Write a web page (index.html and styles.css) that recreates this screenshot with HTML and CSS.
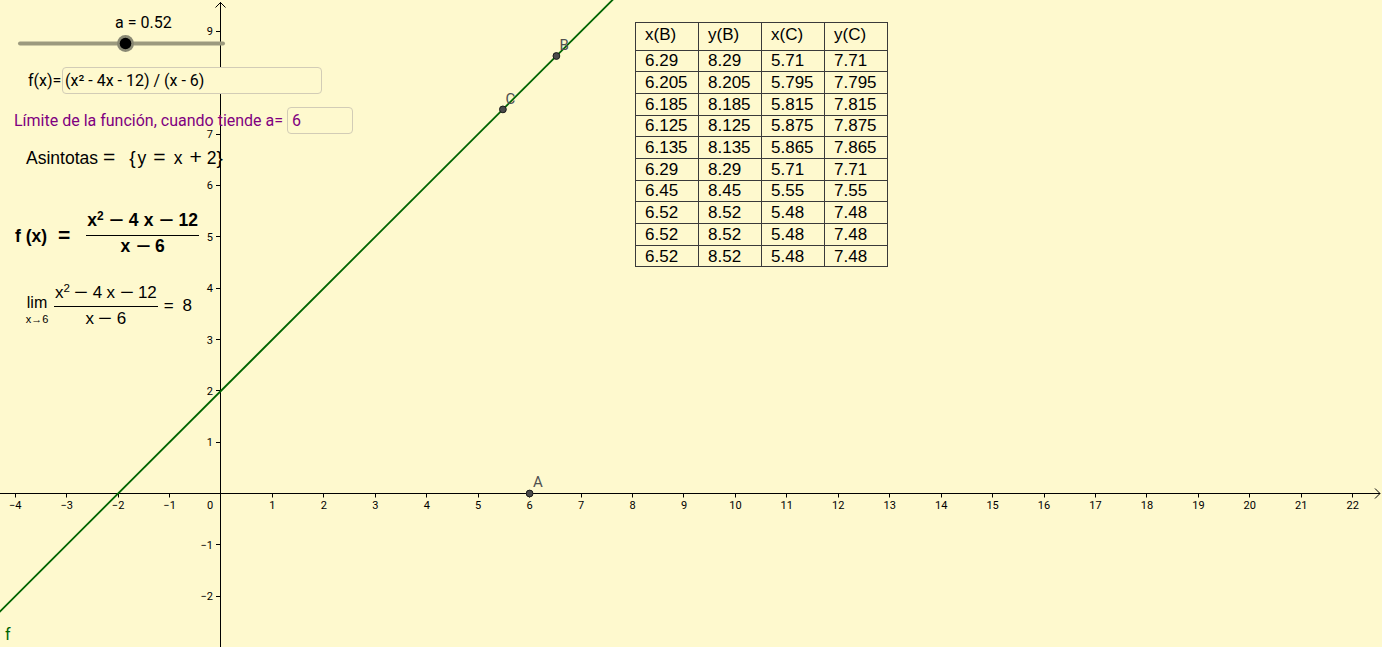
FILE: index.html
```html
<!DOCTYPE html>
<html lang="es">
<head>
<meta charset="utf-8">
<title>Límite de la función</title>
<link rel="stylesheet" href="styles.css">
</head>
<body>
<div class="applet">
  <svg class="graph" width="1382" height="647" viewBox="0 0 1382 647" xmlns="http://www.w3.org/2000/svg">
    <g class="axes">
      <path d="M0 493.5H1380"/>
      <path d="M1375 488.5l5 5-5 5"/>
      <path d="M220.5 2V647"/>
      <path d="M215.5 7.5l5-5 5 5"/>
      <path d="M15.5 493.5v4M66.5 493.5v4M118.5 493.5v4M169.5 493.5v4M272.5 493.5v4M323.5 493.5v4M375.5 493.5v4M426.5 493.5v4M478.5 493.5v4M529.5 493.5v4M581.5 493.5v4M632.5 493.5v4M683.5 493.5v4M735.5 493.5v4M786.5 493.5v4M838.5 493.5v4M889.5 493.5v4M941.5 493.5v4M992.5 493.5v4M1044.5 493.5v4M1095.5 493.5v4M1146.5 493.5v4M1198.5 493.5v4M1249.5 493.5v4M1301.5 493.5v4M1352.5 493.5v4"/>
      <path d="M216 31.5h4.5M216 82.5h4.5M216 134.5h4.5M216 185.5h4.5M216 236.5h4.5M216 288.5h4.5M216 339.5h4.5M216 390.5h4.5M216 442.5h4.5M216 544.5h4.5M216 596.5h4.5"/>
    </g>
    <g class="tick tick-x">
      <text x="15.2" y="509">−4</text>
      <text x="66.7" y="509">−3</text>
      <text x="118.1" y="509">−2</text>
      <text x="169.6" y="509">−1</text>
      <text x="210" y="509">0</text>
      <text x="272.4" y="509">1</text>
      <text x="323.9" y="509">2</text>
      <text x="375.3" y="509">3</text>
      <text x="426.8" y="509">4</text>
      <text x="478.2" y="509">5</text>
      <text x="529.6" y="509">6</text>
      <text x="581.1" y="509">7</text>
      <text x="632.5" y="509">8</text>
      <text x="684" y="509">9</text>
      <text x="735.4" y="509">10</text>
      <text x="786.8" y="509">11</text>
      <text x="838.3" y="509">12</text>
      <text x="889.7" y="509">13</text>
      <text x="941.2" y="509">14</text>
      <text x="992.6" y="509">15</text>
      <text x="1044" y="509">16</text>
      <text x="1095.5" y="509">17</text>
      <text x="1146.9" y="509">18</text>
      <text x="1198.4" y="509">19</text>
      <text x="1249.8" y="509">20</text>
      <text x="1301.2" y="509">21</text>
      <text x="1352.7" y="509">22</text>
    </g>
    <g class="tick tick-y">
      <text x="213" y="35.4">9</text>
      <text x="213" y="86.7">8</text>
      <text x="213" y="138.1">7</text>
      <text x="213" y="189.4">6</text>
      <text x="213" y="240.8">5</text>
      <text x="213" y="292.1">4</text>
      <text x="213" y="343.5">3</text>
      <text x="213" y="394.8">2</text>
      <text x="213" y="446.2">1</text>
      <text x="213" y="548.9">−1</text>
      <text x="213" y="600.2">−2</text>
    </g>
    <line class="fline" x1="-5" y1="616.4" x2="617.5" y2="-5"/>
    <text class="flabel" x="5" y="640">f</text>
    <g class="slider">
      <line class="track" x1="20" y1="43.5" x2="223" y2="43.5"/>
      <circle class="halo" cx="125.5" cy="43.5" r="8.5"/>
      <circle class="knob" cx="125.5" cy="43.5" r="5.8"/>
      <text class="slider-label" x="115" y="28">a = 0.52</text>
    </g>
    <g class="pt">
      <circle cx="529.6" cy="493.5" r="3.4"/>
      <circle cx="556.4" cy="56" r="3.4"/>
      <circle cx="502.9" cy="109.4" r="3.4"/>
    </g>
    <g class="ptlabel">
      <text x="533" y="487">A</text>
      <text x="559.5" y="50">B</text>
      <text x="505.5" y="103.5">C</text>
    </g>
  </svg>

  <div class="panel">
    <div class="row-fx">
      <span class="fx-label">f(x)=</span>
      <div class="input input-wide">(x² - 4x - 12) / (x - 6)</div>
    </div>
    <div class="row-lim">
      <span class="lim-label">Límite de la función, cuando tiende a=</span>
      <div class="input input-narrow">6</div>
    </div>
    <div class="row-asym math">
      <span>Asintotas</span><span class="op gap5">=</span><span class="br gap14">{</span><span class="gap2">y</span><span class="op gap7">=</span><span class="gap8">x</span><span class="op gap7">+</span><span class="gap5">2</span><span class="br">}</span>
    </div>
    <div class="row-f math">
      <span class="lhs">f (x)<span class="eq">=</span></span>
      <span class="frac">
        <span class="num">x<span class="sup">2</span> <span class="minus">−</span> 4 x <span class="minus">−</span> 12</span>
        <span class="den">x <span class="minus">−</span> 6</span>
      </span>
    </div>
    <div class="row-limit math">
      <span class="limop"><span class="lim">lim</span><span class="sub">x→6</span></span>
      <span class="frac">
        <span class="num">x<span class="sup">2</span> <span class="minus">−</span> 4 x <span class="minus">−</span> 12</span>
        <span class="den">x <span class="minus">−</span> 6</span>
      </span>
      <span class="res">= 8</span>
    </div>
  </div>

  <table class="values">
    <tr class="head"><td>x(B)</td><td>y(B)</td><td>x(C)</td><td>y(C)</td></tr>
    <tr><td>6.29</td><td>8.29</td><td>5.71</td><td>7.71</td></tr>
    <tr><td>6.205</td><td>8.205</td><td>5.795</td><td>7.795</td></tr>
    <tr><td>6.185</td><td>8.185</td><td>5.815</td><td>7.815</td></tr>
    <tr><td>6.125</td><td>8.125</td><td>5.875</td><td>7.875</td></tr>
    <tr><td>6.135</td><td>8.135</td><td>5.865</td><td>7.865</td></tr>
    <tr><td>6.29</td><td>8.29</td><td>5.71</td><td>7.71</td></tr>
    <tr><td>6.45</td><td>8.45</td><td>5.55</td><td>7.55</td></tr>
    <tr><td>6.52</td><td>8.52</td><td>5.48</td><td>7.48</td></tr>
    <tr><td>6.52</td><td>8.52</td><td>5.48</td><td>7.48</td></tr>
    <tr><td>6.52</td><td>8.52</td><td>5.48</td><td>7.48</td></tr>
  </table>
</div>
</body>
</html>
```

FILE: styles.css
```css
body {
  margin: 0;
  background: #fef9ce;
}

.applet {
  position: relative;
  width: 1382px;
  height: 647px;
  overflow: hidden;
  background: #fef9ce;
  font-family: Roboto, "Liberation Sans", sans-serif;
  color: #000;
}

.graph {
  position: absolute;
  left: 0;
  top: 0;
}

.axes path {
  fill: none;
  stroke: #000;
  stroke-width: 1;
}

.tick {
  font-family: Roboto, "Liberation Sans", sans-serif;
  font-size: 11px;
  fill: #000;
}

.tick-x { text-anchor: middle; }
.tick-y { text-anchor: end; }

.fline {
  stroke: #006400;
  stroke-width: 1.8;
}

.flabel {
  font-family: Roboto, sans-serif;
  font-size: 16px;
  fill: #006400;
}

.track {
  stroke: #9c9a7e;
  stroke-width: 4;
  stroke-linecap: round;
}

.halo { fill: #8a8974; }
.knob { fill: #000; }

.slider-label {
  font-family: Roboto, sans-serif;
  font-size: 16px;
  fill: #000;
}

.pt circle {
  fill: #4a4a4a;
  stroke: #1a1a1a;
  stroke-width: 1;
}

.ptlabel text {
  font-family: Roboto, sans-serif;
  font-size: 15px;
  fill: #505050;
}

/* left panel */
.panel {
  position: absolute;
  left: 0;
  top: 0;
  display: flex;
  flex-direction: column;
  align-items: flex-start;
  padding-top: 67px;
}

.row-fx {
  display: flex;
  align-items: center;
  margin-left: 28px;
  height: 27px;
  font-size: 16px;
}

.fx-label {
  width: 34px;
  white-space: nowrap;
}

.input {
  box-sizing: border-box;
  height: 27px;
  border: 1px solid #d2ccb6;
  border-radius: 4px;
  background: #fef9ce;
  display: flex;
  align-items: center;
  font-size: 16px;
  white-space: nowrap;
}

.input-wide {
  width: 260px;
  padding-left: 2px;
}

.row-lim {
  display: flex;
  align-items: center;
  margin-top: 13px;
  margin-left: 14px;
  height: 27px;
  font-size: 16px;
  color: #800080;
}

.lim-label {
  width: 273px;
  white-space: nowrap;
}

.input-narrow {
  width: 66px;
  padding-left: 4px;
  color: #800080;
}

.math {
  font-family: "Liberation Sans", Arial, sans-serif;
  color: #000;
  white-space: nowrap;
}

.row-asym {
  display: flex;
  align-items: baseline;
  margin-top: 12px;
  margin-left: 26px;
  height: 22px;
  line-height: 22px;
  font-size: 17.5px;
}

.op { font-size: 21px; }
.br { font-size: 19px; }
.gap2 { margin-left: 2px; }
.gap5 { margin-left: 5px; }
.gap7 { margin-left: 7px; }
.gap8 { margin-left: 8px; }
.gap14 { margin-left: 14px; }

.sup {
  font-size: 0.68em;
  vertical-align: 0.5em;
  line-height: 0;
}

.minus {
  display: inline-block;
  transform: scaleX(1.4);
  margin: 0 2px;
}

.frac {
  display: flex;
  flex-direction: column;
  align-items: center;
}

.row-f {
  display: flex;
  align-items: flex-start;
  margin-top: 42px;
  margin-left: 15px;
  font-size: 17.5px;
  font-weight: bold;
}

.row-f .lhs {
  margin-top: 15px;
  line-height: 20px;
  display: flex;
  align-items: baseline;
}

.row-f .eq {
  font-size: 21px;
  margin-left: 11px;
  margin-right: 16px;
}

.row-f .num {
  line-height: 20px;
  padding: 0 1px 5px;
  border-bottom: 1px solid #000;
  word-spacing: 0.5px;
}

.row-f .den {
  line-height: 20px;
  word-spacing: 0.5px;
}

.row-limit {
  display: flex;
  align-items: flex-start;
  margin-top: 26.6px;
  margin-left: 24px;
  font-size: 17px;
}

.limop {
  display: flex;
  flex-direction: column;
  align-items: center;
  width: 26px;
  margin-top: 10.4px;
}

.limop .lim {
  font-size: 16px;
  line-height: 20px;
}

.limop .sub {
  font-size: 11px;
  line-height: 12px;
}

.row-limit .frac {
  margin-left: 4px;
}

.row-limit .num {
  line-height: 19px;
  padding: 0 1px 4px;
  border-bottom: 1px solid #000;
  word-spacing: -0.3px;
}

.row-limit .den {
  line-height: 19px;
  padding-top: 2px;
  word-spacing: -0.3px;
}

.row-limit .res {
  margin-left: 6px;
  margin-top: 13.5px;
  line-height: 20px;
  word-spacing: 4px;
}

/* table of values */
.values {
  position: absolute;
  left: 635px;
  top: 22px;
  width: 253px;
  border-collapse: collapse;
  table-layout: fixed;
  font-family: "Liberation Sans", Arial, sans-serif;
  font-size: 17px;
  color: #000;
}

.values tr {
  height: 21.7px;
}

.values tr.head {
  height: 27.5px;
}

.values td {
  border: 1px solid #3a3a3a;
  padding: 0 0 0 9px;
  line-height: 19px;
  white-space: nowrap;
}

.values tr.head td {
  padding-bottom: 3px;
}
```
